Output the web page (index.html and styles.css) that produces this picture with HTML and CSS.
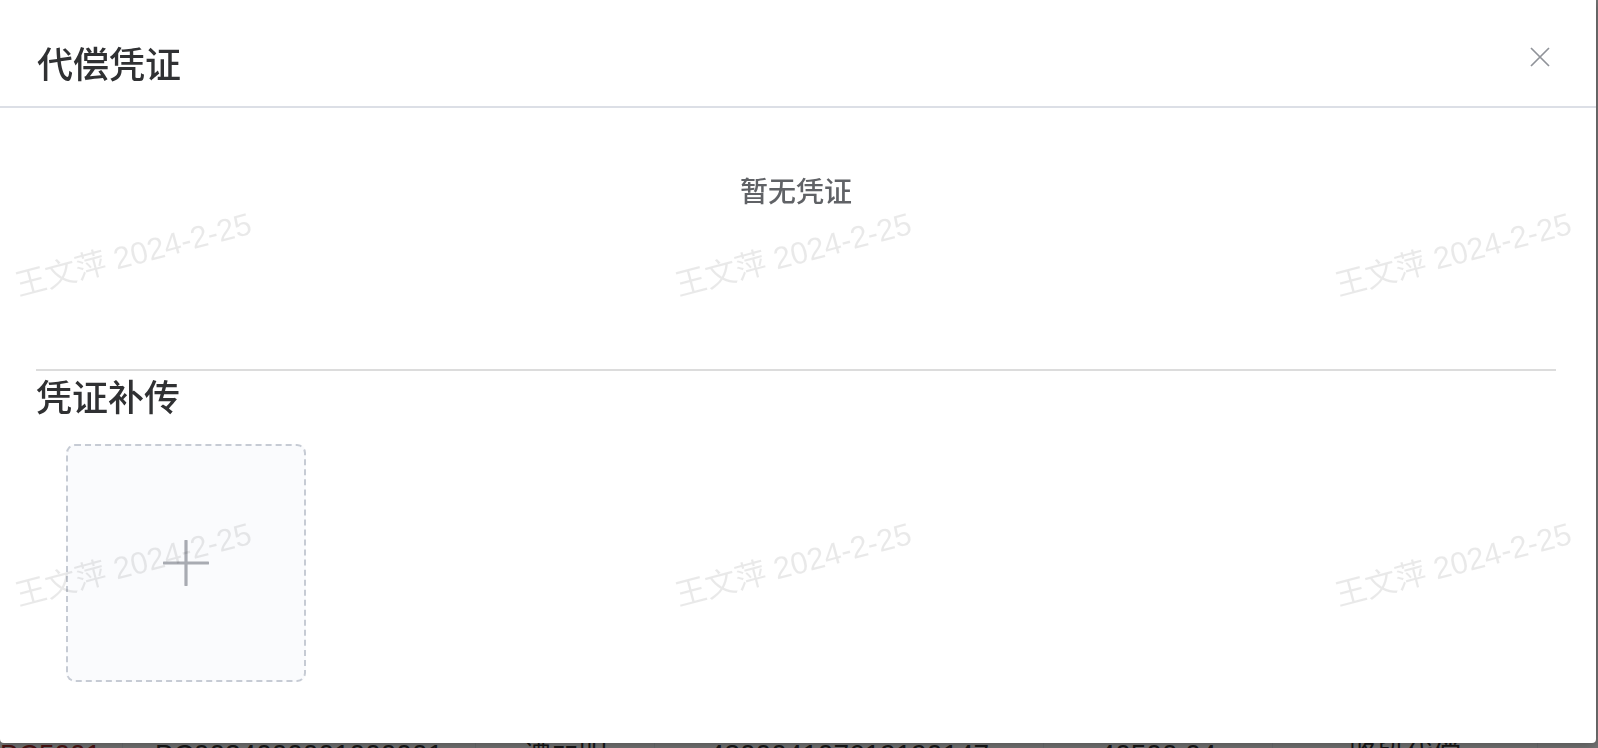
FILE: index.html
```html
<!DOCTYPE html>
<html lang="zh-CN">
<head>
  <meta charset="UTF-8">
  <meta name="viewport" content="width=device-width, initial-scale=1.0">
  <title>代偿凭证</title>
  <link rel="stylesheet" href="styles.css">
</head>
<body>
  <!-- page behind the dialog -->
  <div class="page">
    <div class="table-row">
      <div class="cell cell-id">BC5001</div>
      <div class="cell cell-no">BC0024000001000001</div>
      <div class="cell cell-name">谭丽明</div>
      <div class="cell cell-card">430004107619190147</div>
      <div class="cell cell-amount">40500.04</div>
      <div class="cell cell-type">路段代偿</div>
      <div class="cell cell-last"></div>
    </div>
  </div>

  <div class="mask"></div>

  <div class="dialog">
    <div class="dialog-header">
      <span class="dialog-title">代偿凭证</span>
      <button class="dialog-close" aria-label="关闭">
        <svg width="20" height="20" viewBox="0 0 20 20">
          <path d="M1 1 L19 19 M19 1 L1 19" stroke="#909399" stroke-width="1.7" fill="none"/>
        </svg>
      </button>
    </div>

    <div class="dialog-body">
      <div class="empty">暂无凭证</div>
      <div class="divider"></div>
      <div class="section-title">凭证补传</div>
      <div class="upload-box">
        <svg width="46" height="46" viewBox="0 0 46 46">
          <path d="M23 1 V45 M1 23 H45" stroke="#a8abb2" stroke-width="3.2" stroke-linecap="round"/>
        </svg>
      </div>
    </div>

    <!-- watermark -->
    <div class="watermark">
      <span>王文萍 2024-2-25</span>
      <span>王文萍 2024-2-25</span>
      <span>王文萍 2024-2-25</span>
      <span>王文萍 2024-2-25</span>
      <span>王文萍 2024-2-25</span>
      <span>王文萍 2024-2-25</span>
    </div>
  </div>
</body>
</html>
```

FILE: styles.css
```css
body {
  margin: 0;
  font-family: "Liberation Sans", "Noto Sans CJK SC", sans-serif;
  background: #fff;
  overflow: hidden;
  height: 748px;
}

.page {
  padding-top: 741px;
}

.table-row {
  display: flex;
  height: 7px;
  overflow: hidden;
  font-size: 28px;
  line-height: 28px;
  color: #333;
}

.cell {
  border-left: 1px solid #ebeef5;
  text-align: center;
  white-space: nowrap;
}

.cell-id { width: 122px; color: #a52a2a; border-left: none; text-align: right; padding-right: 50px; box-sizing: border-box; }
.cell-no { width: 352px; }
.cell-name { width: 178px; }
.cell-card { width: 388px; }
.cell-amount { width: 228px; }
.cell-type { width: 264px; }
.cell-last { flex: 1; }

.mask {
  position: fixed;
  inset: 0;
  background: rgba(0, 0, 0, 0.55);
}

.dialog {
  position: fixed;
  top: 0;
  left: 0;
  width: 1596px;
  height: 743px;
  background: #fff;
  border-radius: 0 0 4px 4px;
  box-shadow: 0 2px 12px rgba(0, 0, 0, 0.3);
  overflow: hidden;
  font-family: "Noto Sans CJK SC", "Liberation Sans", sans-serif;
}

.dialog-header {
  display: flex;
  justify-content: space-between;
  align-items: flex-start;
  padding: 40px 46px 22px 37px;
  border-bottom: 2px solid #dcdfe6;
}

.dialog-title {
  font-size: 36px;
  line-height: 44px;
  font-weight: 500;
  color: #303133;
}

.dialog-close {
  margin-top: 7px;
  padding: 0;
  border: none;
  background: none;
  width: 20px;
  height: 20px;
  cursor: pointer;
}

.dialog-body {
  padding: 0 40px 0 36px;
}

.empty {
  height: 261px;
  padding-top: 62px;
  box-sizing: border-box;
  text-align: center;
  font-size: 28px;
  line-height: 40px;
  font-weight: 500;
  color: #606266;
}

.divider {
  height: 2px;
  background: #dcdcdc;
}

.section-title {
  margin-top: 2px;
  font-size: 36px;
  line-height: 44px;
  font-weight: 500;
  color: #303133;
}

.upload-box {
  margin: 27px 0 0 30px;
  width: 240px;
  height: 238px;
  box-sizing: border-box;
  border: 2px dashed #c6cbd4;
  border-radius: 9px;
  background: #fafbfd;
  display: flex;
  align-items: center;
  justify-content: center;
}

.watermark {
  position: absolute;
  left: 0;
  top: -9px;
  right: 0;
  display: grid;
  grid-template-columns: repeat(3, 660px);
  grid-auto-rows: 310px;
  align-items: end;
  padding-left: 20px;
  pointer-events: none;
}

.watermark span {
  display: block;
  width: max-content;
  font-family: "Liberation Sans", "Noto Sans CJK SC", sans-serif;
  font-size: 31px;
  line-height: 1;
  color: rgba(0, 0, 0, 0.085);
  transform-origin: 0 100%;
  transform: rotate(-15deg);
}
```
